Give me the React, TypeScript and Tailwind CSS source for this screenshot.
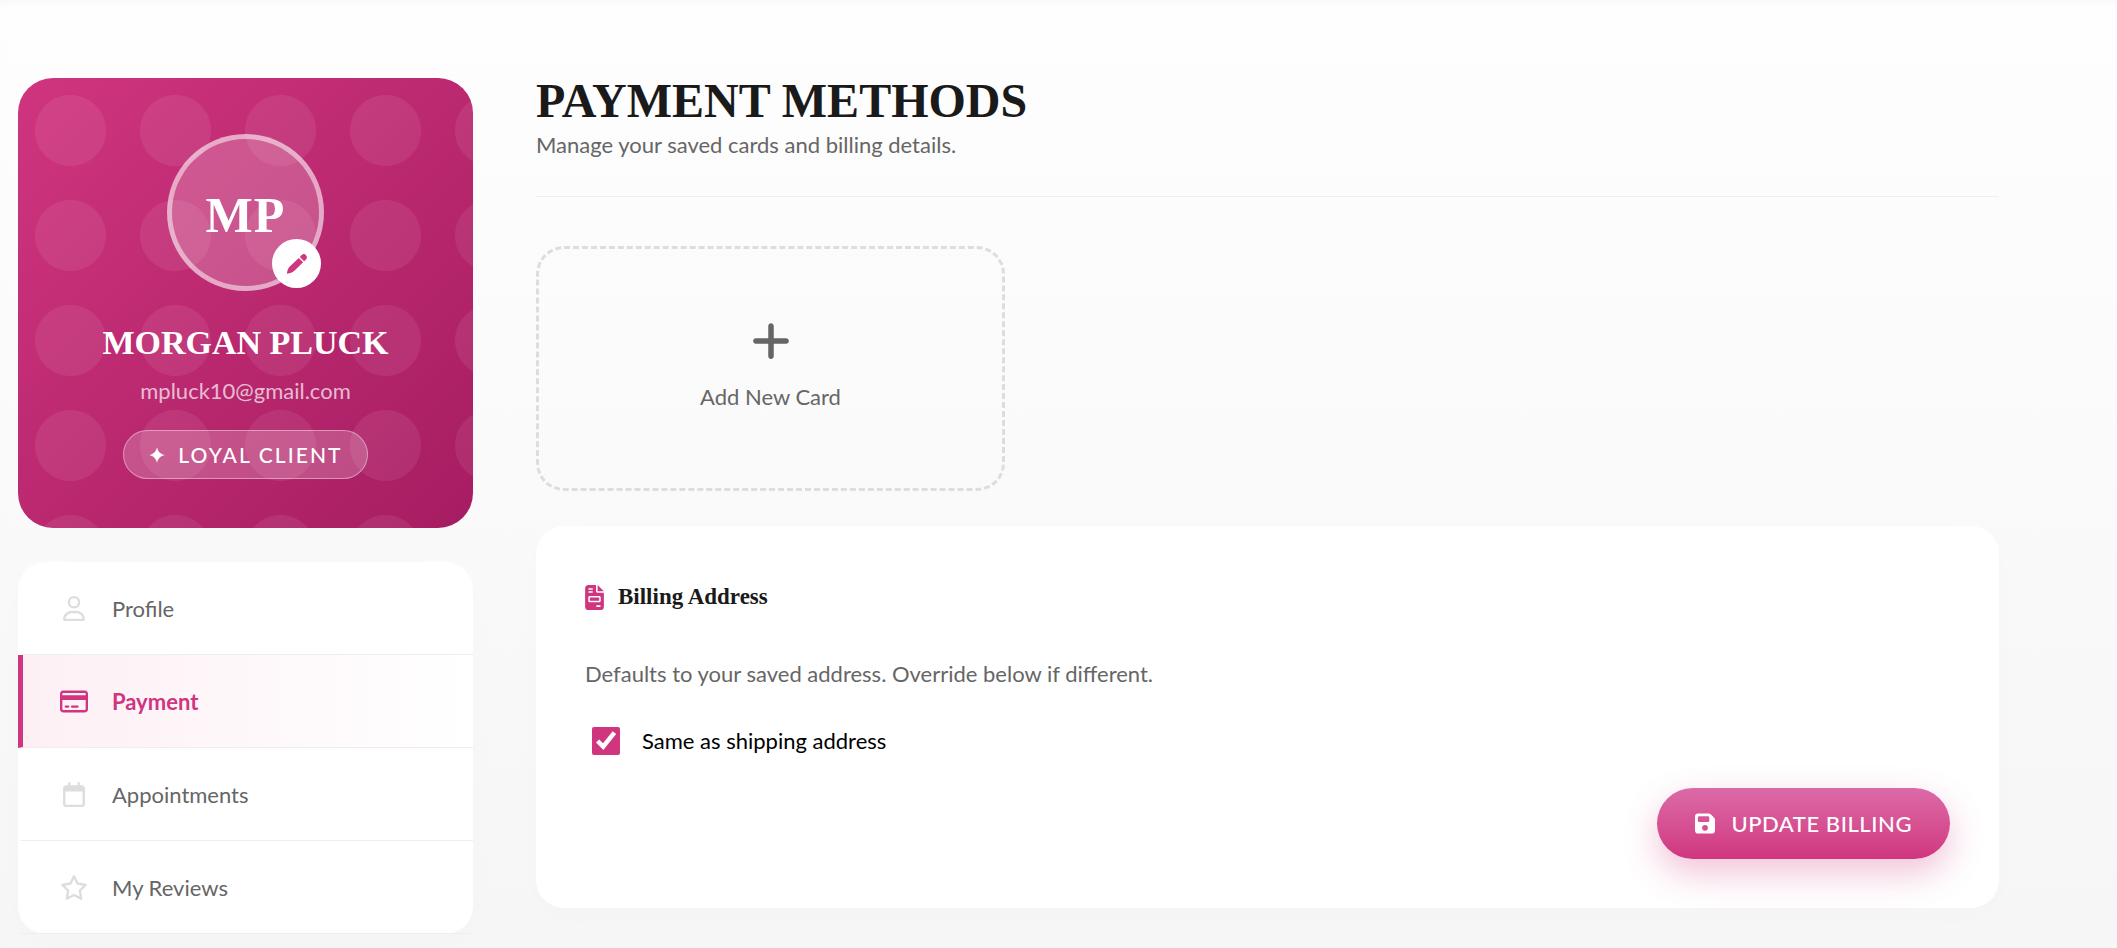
import React, { useState } from 'react';
import {
    FaRegUser,
    FaRegCreditCard,
    FaRegCalendar,
    FaRegStar,
    FaFileInvoice,
    FaFloppyDisk,
    FaPlus,
} from 'react-icons/fa6';
import type { IconType } from 'react-icons';

interface NavItem {
    label: string;
    icon: IconType;
}

const NAV_ITEMS: NavItem[] = [
    { label: 'Profile', icon: FaRegUser },
    { label: 'Payment', icon: FaRegCreditCard },
    { label: 'Appointments', icon: FaRegCalendar },
    { label: 'My Reviews', icon: FaRegStar },
];

const PencilIcon: React.FC = () => (
    <svg className="w-5 h-5" viewBox="0 0 20 20" fill="currentColor" aria-hidden="true">
        <path d="M11.8 3.9 16.1 8.2 7.4 16.7C6 18 2.5 19.4 0.3 19.7C-0.1 19.7 0 19.4 0 19C0.3 16.8 1.3 13.9 2.8 12.6Z" />
        <path d="M12.8 3 14.7 1.1C16.2-.4 17.9-.1 19 1.2C20.2 2.5 20.3 4 19 5.4L17.1 7.3Z" />
    </svg>
);

const ProfileCard: React.FC = () => (
    <section className="rounded-[35px] bg-gradient-to-br from-[#d0357f] to-[#a61c62] overflow-hidden text-white">
        <div className="flex flex-col items-center px-8 pt-14 pb-[49px] bg-[radial-gradient(circle,rgba(255,255,255,0.07)_35px,transparent_36px)] bg-[length:105px_105px]">
            <div className="relative w-[157px] h-[157px] rounded-full border-[5px] border-white/60 bg-white/20 bg-clip-padding flex items-center justify-center">
                <span className="pt-1 font-['Liberation_Serif',serif] font-bold text-[50px] leading-none tracking-wide">MP</span>
                <button
                    type="button"
                    aria-label="Edit photo"
                    className="absolute -right-0.5 -bottom-0.5 w-[49px] h-[49px] rounded-full bg-white text-[#d0357f] flex items-center justify-center"
                >
                    <PencilIcon />
                </button>
            </div>
            <h2 className="mt-8 font-['Liberation_Serif',serif] font-bold text-[34px] leading-10 whitespace-nowrap">MORGAN PLUCK</h2>
            <p className="mt-3.5 text-[22px] leading-7 text-white/70">mpluck10@gmail.com</p>
            <div className="mt-[25px] h-[49px] px-6 rounded-full border border-white/40 bg-white/20 flex items-center gap-3 text-[21px] font-medium whitespace-nowrap">
                <svg className="w-[18px] h-[18px]" viewBox="0 0 16 16" fill="currentColor" aria-hidden="true">
                    <path d="M8 1C8.9 5 11 7.1 15 8C11 8.9 8.9 11 8 15C7.1 11 5 8.9 1 8C5 7.1 7.1 5 8 1Z" />
                </svg>
                <span className="tracking-widest">LOYAL CLIENT</span>
            </div>
        </div>
    </section>
);

const SideNav: React.FC = () => {
    const [active, setActive] = useState('Payment');

    return (
        <nav className="rounded-[28px] bg-white shadow-[0_8px_40px_rgba(0,0,0,0.01)]">
            {NAV_ITEMS.map(({ label, icon: Icon }) => (
                <button
                    key={label}
                    type="button"
                    onClick={() => setActive(label)}
                    className={`w-full h-[93px] flex items-center gap-6 pl-[37px] border-l-[5px] border-b border-b-[#eeeeee] text-[22px] ${
                        active === label
                            ? 'border-l-[#d0357f] bg-gradient-to-r from-[#fdf0f5] to-white text-[#d0357f] font-bold'
                            : 'border-l-transparent text-[#666666]'
                    }`}
                >
                    <Icon className={`w-7 h-[25px] ${active === label ? '' : 'text-[#dddddd]'}`} />
                    {label}
                </button>
            ))}
        </nav>
    );
};

const BillingCard: React.FC = () => {
    const [sameAddress, setSameAddress] = useState(true);

    return (
        <section className="mt-[35px] p-[49px] rounded-[28px] bg-white shadow-[0_8px_40px_rgba(0,0,0,0.01)]">
            <h2 className="flex items-center gap-3.5 font-['Liberation_Serif',serif] font-bold text-[23px] leading-[44px] text-[#1a1a1a]">
                <FaFileInvoice className="w-[19px] h-[25px] text-[#d0357f]" />
                Billing Address
            </h2>
            <p className="mt-[34px] text-[22px] leading-[42px] text-[#666666]">
                Defaults to your saved address. Override below if different.
            </p>
            <label className="mt-[25px] ml-[7px] flex items-center gap-[22px] text-[22px] leading-[42px] text-black w-fit">
                <input
                    type="checkbox"
                    checked={sameAddress}
                    onChange={(e) => setSameAddress(e.target.checked)}
                    className="w-7 h-7 accent-[#d0357f]"
                />
                Same as shipping address
            </label>
            <div className="mt-[26px] flex justify-end">
                <button
                    type="button"
                    className="h-[71px] px-[38px] rounded-full bg-gradient-to-b from-[#dc6aa8] to-[#d0357f] shadow-[0_14px_35px_rgba(208,53,127,0.3)] text-white text-[22px] font-medium tracking-wide flex items-center gap-4"
                >
                    <FaFloppyDisk className="w-5 h-[23px]" />
                    UPDATE BILLING
                </button>
            </div>
        </section>
    );
};

const App: React.FC = () => (
    <div className="min-h-screen bg-gradient-to-b from-[#fefefe] to-[#f6f6f6] shadow-[inset_0_6px_8px_-4px_rgba(0,0,0,0.03)] font-[Lato,sans-serif]">
        <div className="flex items-start gap-[63px] pl-[18px] pr-[118px] pt-[78px]">
            <aside className="w-[455px] shrink-0 flex flex-col gap-[34px]">
                <ProfileCard />
                <SideNav />
            </aside>
            <main className="flex-1 min-w-0">
                <header className="pb-[33px] border-b border-[#eeeeee]">
                    <h1 className="font-['Liberation_Serif',serif] font-bold text-[48px] leading-[46px] text-[#1a1a1a]">PAYMENT METHODS</h1>
                    <p className="mt-[3px] text-[22px] leading-9 text-[#666666]">Manage your saved cards and billing details.</p>
                </header>
                <div className="mt-[49px] grid grid-cols-3 gap-7">
                    <button
                        type="button"
                        className="h-[245px] pb-1 rounded-[28px] border-[3px] border-dashed border-[#dddddd] flex flex-col items-center justify-center gap-4 text-[22px] leading-9 text-[#666666]"
                    >
                        <FaPlus className="w-11 h-11" />
                        Add New Card
                    </button>
                </div>
                <BillingCard />
            </main>
        </div>
    </div>
);

export default App;
